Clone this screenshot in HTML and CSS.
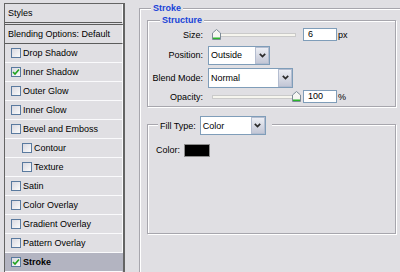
FILE: index.html
```html
<!DOCTYPE html>
<html>
<head>
<meta charset="utf-8">
<title>Layer Style - Stroke</title>
<link rel="stylesheet" href="styles.css">
</head>
<body>
<div class="dialog">

  <ul class="styles-list">
    <li class="head">Styles</li>
    <li class="head blend">Blending Options: Default</li>
    <li><span class="check"></span>Drop Shadow</li>
    <li><span class="check"><svg width="8" height="8" viewBox="0 0 8 8"><polyline points="1,4 3,6 7,1.5" fill="none" stroke="#1fa31f" stroke-width="1.6"/></svg></span>Inner Shadow</li>
    <li><span class="check"></span>Outer Glow</li>
    <li><span class="check"></span>Inner Glow</li>
    <li><span class="check"></span>Bevel and Emboss</li>
    <li class="sub"><span class="check"></span>Contour</li>
    <li class="sub"><span class="check"></span>Texture</li>
    <li><span class="check"></span>Satin</li>
    <li><span class="check"></span>Color Overlay</li>
    <li><span class="check"></span>Gradient Overlay</li>
    <li><span class="check"></span>Pattern Overlay</li>
    <li class="sel"><span class="check"><svg width="8" height="8" viewBox="0 0 8 8"><polyline points="1,4 3,6 7,1.5" fill="none" stroke="#1fa31f" stroke-width="1.6"/></svg></span>Stroke</li>
  </ul>

  <div class="options">
    <div class="group stroke">
      <div class="group-title">Stroke</div>

      <div class="group structure">
        <div class="group-title">Structure</div>
        <div class="form">
          <label>Size:</label>
          <div class="ctl">
            <div class="slider">
              <div class="track"></div>
              <svg class="thumb" style="left:4px" width="9" height="11" viewBox="0 0 9 11"><path d="M4.5 0.5 L8.5 4 L8.5 10.5 L0.5 10.5 L0.5 4 Z" fill="#f6f6f2" stroke="#7d8b97"/><path d="M1 9.25 H8" stroke="#2ab52a" stroke-width="1.5"/></svg>
            </div>
            <div class="num">6</div>
            <span class="unit">px</span>
          </div>

          <label>Position:</label>
          <div class="ctl">
            <div class="select w-pos">
              <span class="value">Outside</span>
              <span class="btn"><svg width="7" height="5" viewBox="0 0 7 5"><polyline points="0.8,0.8 3.5,3.6 6.2,0.8" fill="none" stroke="#2b2b2b" stroke-width="1.7"/></svg></span>
            </div>
          </div>

          <label>Blend Mode:</label>
          <div class="ctl">
            <div class="select w-blend">
              <span class="value">Normal</span>
              <span class="btn"><svg width="7" height="5" viewBox="0 0 7 5"><polyline points="0.8,0.8 3.5,3.6 6.2,0.8" fill="none" stroke="#2b2b2b" stroke-width="1.7"/></svg></span>
            </div>
          </div>

          <label>Opacity:</label>
          <div class="ctl">
            <div class="slider">
              <div class="track"></div>
              <svg class="thumb" style="left:84px" width="9" height="11" viewBox="0 0 9 11"><path d="M4.5 0.5 L8.5 4 L8.5 10.5 L0.5 10.5 L0.5 4 Z" fill="#f6f6f2" stroke="#7d8b97"/><path d="M1 9.25 H8" stroke="#2ab52a" stroke-width="1.5"/></svg>
            </div>
            <div class="num">100</div>
            <span class="unit">%</span>
          </div>
        </div>
      </div>

      <div class="group fill">
        <div class="group-title fill-title">
          <span>Fill Type:</span>
          <div class="select w-fill">
            <span class="value">Color</span>
            <span class="btn"><svg width="7" height="5" viewBox="0 0 7 5"><polyline points="0.8,0.8 3.5,3.6 6.2,0.8" fill="none" stroke="#2b2b2b" stroke-width="1.7"/></svg></span>
          </div>
        </div>
        <div class="color-row">
          <span>Color:</span>
          <span class="swatch"></span>
        </div>
      </div>
    </div>
  </div>

</div>
</body>
</html>
```

FILE: styles.css
```css
body {
  margin: 0;
  background: #e0dfe3;
  font-family: "Liberation Sans", Arial, sans-serif;
  font-size: 9px;
  color: #000;
}

.dialog {
  display: flex;
  height: 272px;
  overflow: hidden;
}

/* left list of effects */
.styles-list {
  list-style: none;
  margin: 3px 0 0 4px;
  padding: 0;
  width: 121px;
  box-sizing: border-box;
  border: 1px solid #646464;
  border-right-width: 2px;
  border-bottom: none;
  flex: none;
  align-self: flex-start;
}

.styles-list li {
  display: flex;
  align-items: center;
  height: 18px;
  padding-left: 6px;
  border-bottom: 1px solid #fafafc;
  border-right: 1px solid #fafafc;
}

.styles-list li.head {
  padding-left: 3px;
  border-bottom: 3px double #5c5c5c;
}

.styles-list li.blend {
  border-bottom: 1px solid #5c5c5c;
}

.styles-list li.sub {
  padding-left: 17px;
}

.styles-list li.sel {
  background: #b3b4c1;
  font-weight: bold;
  border-right-color: #b3b4c1;
}

.check {
  width: 10px;
  height: 10px;
  box-sizing: border-box;
  flex: none;
  margin-right: 2px;
  border: 1px solid #5a7a9f;
  background: linear-gradient(135deg, #d9d9e1, #fbfbfb);
  display: flex;
  align-items: center;
  justify-content: center;
}

/* right side */
.options {
  padding: 8px 0 0 14px;
}

.group {
  position: relative;
  border: 1px solid #a7a6ad;
  box-shadow: inset 1px 1px 0 #fff, 1px 1px 0 #fff;
}

.group-title {
  position: absolute;
  background: #e0dfe3;
  padding: 0 2px;
  line-height: 12px;
  font-weight: bold;
  color: #1843d8;
}

.stroke {
  width: 265px;
  height: 300px;
  box-sizing: border-box;
  padding: 11px 7px 0 7px;
}

.stroke > .group-title {
  left: 11px;
  top: -7px;
}

.structure {
  padding: 4px 0 2px 0;
}

.structure > .group-title {
  left: 12px;
  top: -7px;
}

.form {
  display: grid;
  grid-template-columns: 55px auto;
  grid-template-rows: 19px 22px 23px 15px;
  column-gap: 5px;
  align-items: center;
}

.form label {
  text-align: right;
}

.ctl {
  display: flex;
  align-items: center;
}

.slider {
  position: relative;
  width: 92px;
  height: 11px;
}

.track {
  position: absolute;
  left: 4px;
  right: 4px;
  top: 4px;
  height: 2px;
  background: #f6f5ee;
  border: 1px solid #cacaca;
}

.thumb {
  position: absolute;
  top: 0;
}

.num {
  width: 34px;
  height: 13px;
  box-sizing: border-box;
  margin-left: 3px;
  padding-left: 4px;
  line-height: 11px;
  border: 1px solid #7f9db9;
  background: #fff;
}

.unit {
  margin-left: 1px;
}

.select {
  display: flex;
  box-sizing: border-box;
  height: 19px;
  border: 1px solid #7f9db9;
  background: #fff;
}

.select .value {
  flex: 1;
  display: flex;
  align-items: center;
  padding-left: 2px;
}

.select .btn {
  width: 14px;
  box-sizing: border-box;
  border: 1px solid #b4bdd0;
  background: linear-gradient(#eceef4, #c3c7d6);
  display: flex;
  align-items: center;
  justify-content: center;
}

.w-pos { width: 62px; }
.w-blend { width: 85px; height: 20px; }
.w-fill { width: 66px; }

.fill {
  margin-top: 17px;
  height: 110px;
  box-sizing: border-box;
  padding-top: 18px;
}

.fill-title {
  left: 10px;
  top: -9px;
  display: flex;
  align-items: center;
  gap: 4px;
  padding: 0 6px 0 2px;
  font-weight: normal;
  color: #000;
}

.color-row {
  display: flex;
  align-items: center;
  height: 14px;
  padding-left: 8px;
}

.swatch {
  width: 26px;
  height: 13px;
  box-sizing: border-box;
  margin-left: 4px;
  border: 1px solid #8c8c8c;
  background: #000;
}
```
